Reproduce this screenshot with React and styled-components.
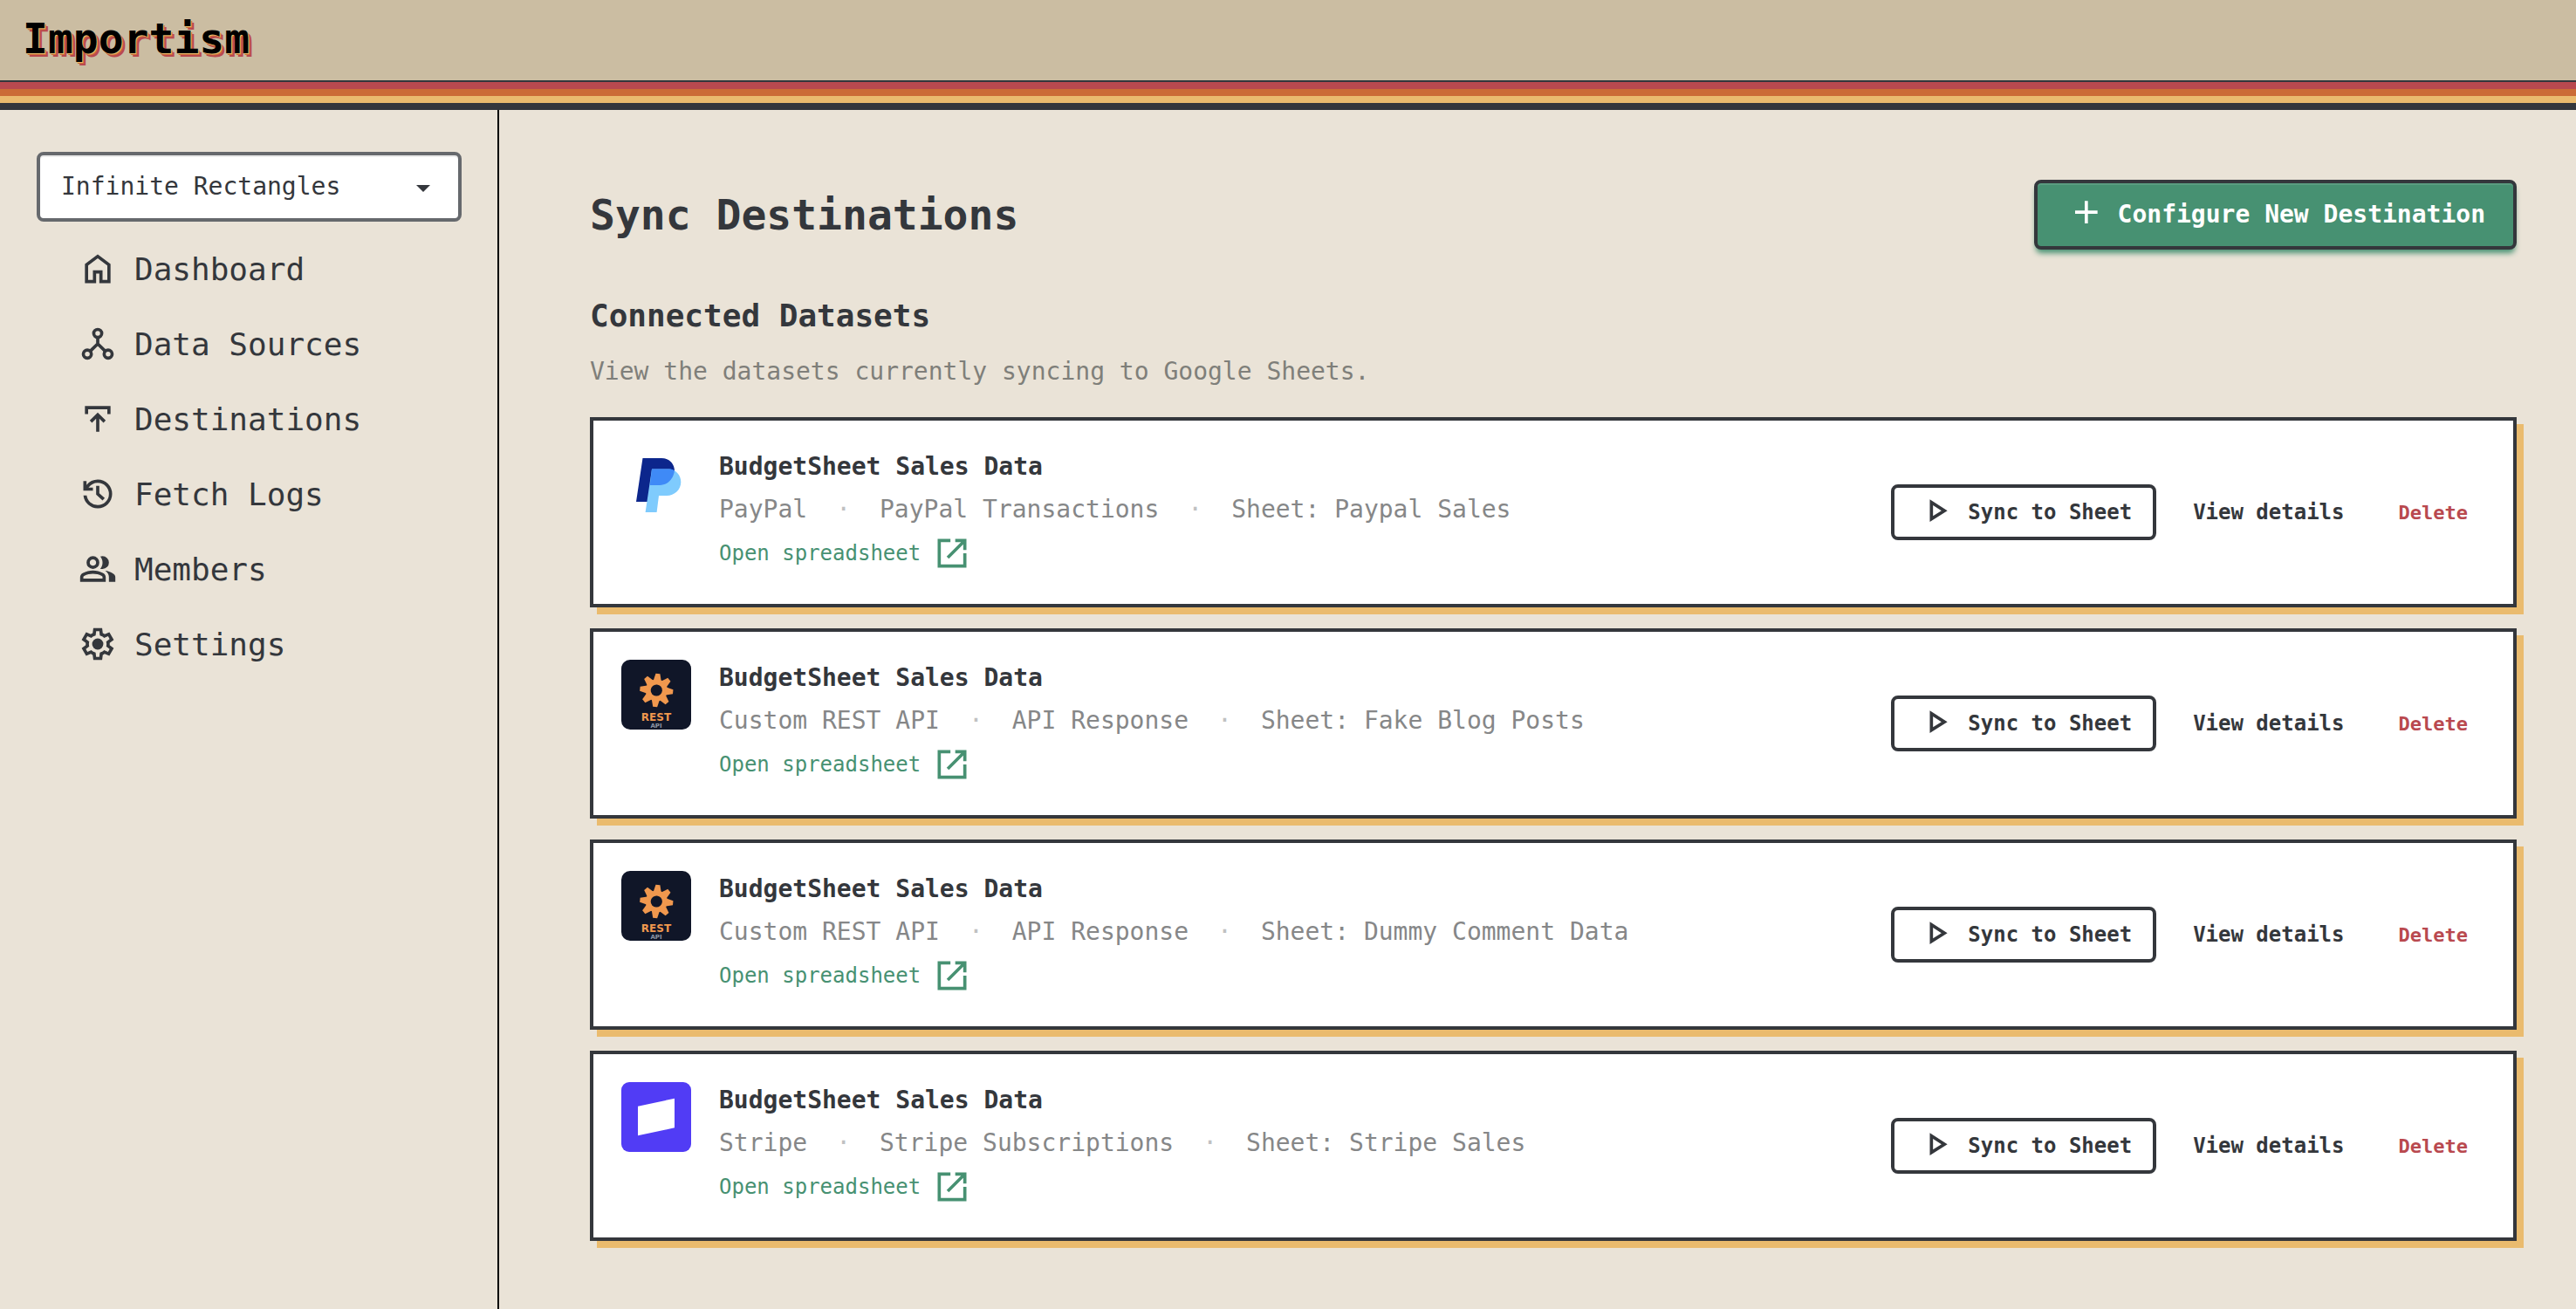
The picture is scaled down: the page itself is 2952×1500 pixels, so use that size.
import { useState } from "react";
import styled, { createGlobalStyle } from "styled-components";

const GlobalStyle = createGlobalStyle`
    * {
        box-sizing: border-box;
    }

    body {
        margin: 0;
        background: #eae3d7;
        color: #34373c;
        font-family: "DejaVu Sans Mono", "Liberation Mono", monospace;
        font-size: 28px;
    }

    h1, h2, h3, p, ul {
        margin: 0;
        padding: 0;
    }

    button, select {
        font-family: inherit;
    }
`;

const Page = styled.div`
    display: flex;
    flex-direction: column;
    min-height: 100vh;
`;

const Header = styled.header`
    display: flex;
    padding: 16px 26px 20px;
    background: #cbbda2;
    border-bottom: 2px solid #34373c;
`;

const Logo = styled.a`
    color: #000;
    font-size: 48px;
    font-weight: bold;
    line-height: 56px;
    text-decoration: none;
    text-shadow: 1px 1px 0 #eabb6e, 2px 2px 0 #cb6c36, 4px 4px 0 #b9494f;
`;

const Stripe = styled.div`
    height: 8px;
    background: ${(props) => props.$color};
`;

const Body = styled.div`
    display: flex;
    flex: 1;
`;

const Sidebar = styled.aside`
    flex: none;
    width: 572px;
    padding: 48px 41px 48px 42px;
    border-right: 2px solid #000;
`;

const SelectWrap = styled.div`
    position: relative;
`;

const TeamSelect = styled.select`
    display: block;
    width: 100%;
    height: 80px;
    padding: 0 64px 2px 24px;
    appearance: none;
    background: #fff;
    border: 4px solid #66696d;
    border-radius: 8px;
    box-shadow: inset 0 2px 0 #ebebeb;
    color: #34373c;
    font-size: 28px;
`;

const SelectArrow = styled.svg`
    position: absolute;
    top: 38px;
    right: 36px;
    width: 16px;
    height: 8px;
    pointer-events: none;
`;

const NavList = styled.ul`
    margin-top: 11px;
    padding-left: 48px;
    list-style: none;
`;

const NavLink = styled.a`
    display: flex;
    align-items: center;
    gap: 20px;
    height: 86px;
    color: #34373c;
    font-size: 36px;
    text-decoration: none;
`;

const IconSvg = styled.svg`
    flex: none;
    width: 44px;
    height: 44px;
    fill: currentColor;
`;

const Main = styled.main`
    flex: 1;
    min-width: 0;
    padding: 80px 68px 78px 104px;
`;

const TitleRow = styled.div`
    display: flex;
    align-items: center;
    justify-content: space-between;
`;

const PageTitle = styled.h1`
    font-size: 48px;
    line-height: 56px;
`;

const PrimaryButton = styled.button`
    display: flex;
    align-items: center;
    gap: 16px;
    height: 80px;
    padding: 0 32px 2px;
    background: #479172;
    border: 4px solid #34373c;
    border-radius: 8px;
    box-shadow: inset 0 2px 0 #5a9c80, 0 6px 6px -2px #479172;
    color: #fff;
    font-size: 28px;
    font-weight: bold;
`;

const SectionTitle = styled.h2`
    margin-top: 52px;
    font-size: 36px;
    line-height: 48px;
`;

const SectionText = styled.p`
    margin-top: 20px;
    color: #7f7f7a;
    line-height: 40px;
`;

const CardList = styled.div`
    display: flex;
    flex-direction: column;
    gap: 24px;
    margin-top: 32px;
`;

const Card = styled.article`
    display: flex;
    align-items: center;
    gap: 32px;
    padding: 32px;
    background: #fff;
    border: 4px solid #34373c;
    box-shadow: 8px 8px 0 #eabb6e;
`;

const LogoSvg = styled.svg`
    flex: none;
    align-self: flex-start;
    width: 80px;
    height: 80px;
`;

const Details = styled.div`
    flex: 1;
    padding-bottom: 4px;
`;

const CardTitle = styled.h3`
    font-size: 28px;
    line-height: 42px;
`;

const Meta = styled.p`
    display: flex;
    gap: 33px;
    margin-top: 8px;
    color: #868788;
    line-height: 40px;
`;

const Dot = styled.span`
    color: #c0c1c2;
`;

const SheetLink = styled.a`
    display: inline-flex;
    align-items: center;
    gap: 14px;
    margin-top: 8px;
    color: #479172;
    font-size: 24px;
    text-decoration: none;
    vertical-align: top;
`;

const Actions = styled.div`
    display: flex;
    align-items: center;
    gap: 14px;
`;

const ActionButton = styled.button`
    display: flex;
    align-items: center;
    gap: 16px;
    height: 64px;
    padding: 0 24px;
    background: transparent;
    border: 4px solid ${(props) => (props.$outlined ? "#34373c" : "transparent")};
    border-radius: 8px;
    color: #34373c;
    font-size: 24px;
    font-weight: bold;
`;

const DeleteButton = styled.button`
    height: 64px;
    padding: 0 20px;
    background: transparent;
    border: 0;
    color: #b9494f;
    font-size: 22px;
    font-weight: bold;
`;

const HomeIcon = () => (
    <IconSvg viewBox="0 0 24 24">
        <path d="M4 21V9l8-6 8 6v12h-7v-6h-2v6H4Zm2-2h3v-6h6v6h3v-9l-6-4.5L6 10v9Z" />
    </IconSvg>
);

const SourcesIcon = () => (
    <IconSvg viewBox="0 0 24 24">
        <g fill="none" stroke="currentColor" strokeWidth="2">
            <circle cx="12" cy="5.5" r="2.5" />
            <circle cx="5.5" cy="18.4" r="2.5" />
            <circle cx="18.5" cy="18.4" r="2.5" />
            <path d="M12 8v4.5M7.3 16.6 12 12l4.7 4.6" />
        </g>
    </IconSvg>
);

const DestinationsIcon = () => (
    <IconSvg viewBox="0 -960 960 960">
        <path d="M440-160v-326L336-382l-56-58 200-200 200 200-56 58-104-104v326h-80ZM160-600v-200h640v200h-80v-120H240v120h-80Z" />
    </IconSvg>
);

const HistoryIcon = () => (
    <IconSvg viewBox="0 -960 960 960">
        <path d="M480-120q-138 0-240.500-91.500T122-440h82q14 104 92.500 172T480-200q117 0 198.500-81.500T760-480q0-117-81.500-198.500T480-760q-69 0-129 32t-101 88h110v80H120v-240h80v94q51-64 124.500-99T480-840q75 0 140.500 28.500t114 77q48.500 48.500 77 114T840-480q0 75-28.500 140.500t-77 114q-48.500 48.500-114 77T480-120Zm120-196L440-464v-216h80v182l136 124-56 58Z" />
    </IconSvg>
);

const MembersIcon = () => (
    <IconSvg viewBox="0 -960 960 960">
        <path d="M40-160v-112q0-34 17.500-62.500T104-378q62-31 126-46.500T360-440q66 0 130 15.500T616-378q29 15 46.500 43.500T680-272v112H40Zm720 0v-120q0-44-24.500-84.500T666-434q51 6 96 20.500t84 35.500q36 20 55 44.500t19 53.500v120H760ZM360-480q-66 0-113-47t-47-113q0-66 47-113t113-47q66 0 113 47t47 113q0 66-47 113t-113 47Zm400-160q0 66-47 113t-113 47q-11 0-28-2.500t-28-5.500q27-32 41.500-71t14.500-81q0-42-14.500-81T544-792q14-5 28-6.500t28-1.500q66 0 113 47t47 113ZM120-240h480v-32q0-11-5.500-20T580-306q-54-27-109-40.500T360-360q-56 0-111 13.500T140-306q-9 5-14.500 14t-5.500 20v32Zm240-320q33 0 56.500-23.500T440-640q0-33-23.500-56.500T360-720q-33 0-56.500 23.500T280-640q0 33 23.500 56.500T360-560Z" />
    </IconSvg>
);

const SettingsIcon = () => (
    <IconSvg viewBox="0 -960 960 960">
        <path d="m370-80-16-128q-13-5-24.500-12T307-235l-119 50L78-375l103-78q-1-7-1-13.500v-27q0-6.500 1-13.500L78-585l110-190 119 50q11-8 23-15t24-12l16-128h220l16 128q13 5 24.500 12t22.500 15l119-50 110 190-103 78q1 7 1 13.500v27q0 6.500-2 13.500l103 78-110 190-118-50q-11 8-23 15t-24 12L590-80H370Zm70-80h79l14-106q31-8 57.500-23.500T639-327l99 41 39-68-86-65q5-14 7-29.500t2-31.500q0-16-2-31.500t-7-29.500l86-65-39-68-99 42q-22-23-48.500-38.500T533-694l-13-106h-79l-14 106q-31 8-57.500 23.500T321-633l-99-41-39 68 86 64q-5 15-7 30t-2 32q0 16 2 31t7 30l-86 65 39 68 99-42q22 23 48.500 38.500T427-266l13 106Z" />
        <circle cx="480" cy="-480" r="140" />
    </IconSvg>
);

const PlusIcon = () => (
    <IconSvg viewBox="-1 1 24 24">
        <path d="M19 13h-6v6h-2v-6H5v-2h6V5h2v6h6v2Z" />
    </IconSvg>
);

const PlayIcon = () => (
    <IconSvg viewBox="-1 1 24 24">
        <path d="M8 5v14l11-7L8 5Zm2 3.640L15.270 12 10 15.360V8.640Z" />
    </IconSvg>
);

const OpenIcon = () => (
    <IconSvg viewBox="0 0 24 24">
        <path d="M11 3H3v18h18v-9h-2v7H5V5h6V3Z" />
        <path d="M14 3v2h3.600l-9 9 1.400 1.400 9-9V10h2V3h-7Z" />
    </IconSvg>
);

const PaypalLogo = () => (
    <LogoSvg viewBox="0 0 80 80">
        <path fill="#0c268c" d="M24.500 11H46c9 0 14.500 6 15 14L45 44H33l-3 17H17Z" />
        <path fill="#7fcbfd" d="M35 23.500h20c8 1 13.300 7 13.300 15C68.300 47 61 54 52 54h-9l-2.400 19h-13Z" />
        <path fill="#3f8af7" d="M35 23.500h20c2 0 4.500.700 6 1.500-1 9-7.500 17-17 17H32.800Z" />
    </LogoSvg>
);

// one tooth, pointing up, centred on the gear's middle
const TOOTH = "M-4.500-11-2.500-19h5l2 8Z";

const RestLogo = () => (
    <LogoSvg viewBox="0 0 80 80">
        <rect width="80" height="80" rx="10" fill="#101628" />
        <g transform="translate(40.300 35) rotate(5)" fill="#f0984e">
            {[0, 45, 90, 135, 180, 225, 270, 315].map((angle) => (
                <path key={angle} d={TOOTH} transform={`rotate(${angle})`} />
            ))}
            <circle r="12.500" />
            <circle r="6.600" fill="#101628" />
        </g>
        <text x="40" y="70" textAnchor="middle" fill="#f0984e" fontFamily="DejaVu Sans, sans-serif" fontSize="12" fontWeight="bold">
            REST
        </text>
        <text x="40" y="78" textAnchor="middle" fill="#8c94a3" fontFamily="DejaVu Sans, sans-serif" fontSize="7" fontWeight="bold">
            API
        </text>
    </LogoSvg>
);

const StripeLogo = () => (
    <LogoSvg viewBox="0 0 80 80">
        <rect width="80" height="80" rx="9" fill="#513cf5" />
        <path fill="#fff" d="M19 27.700 61 18.700v33.600L19 61.300Z" />
    </LogoSvg>
);

const navItems = [
    { label: "Dashboard", Icon: HomeIcon },
    { label: "Data Sources", Icon: SourcesIcon },
    { label: "Destinations", Icon: DestinationsIcon },
    { label: "Fetch Logs", Icon: HistoryIcon },
    { label: "Members", Icon: MembersIcon },
    { label: "Settings", Icon: SettingsIcon },
];

const datasets = [
    { id: 1, Icon: PaypalLogo, source: "PayPal", dataset: "PayPal Transactions", sheet: "Paypal Sales" },
    { id: 2, Icon: RestLogo, source: "Custom REST API", dataset: "API Response", sheet: "Fake Blog Posts" },
    { id: 3, Icon: RestLogo, source: "Custom REST API", dataset: "API Response", sheet: "Dummy Comment Data" },
    { id: 4, Icon: StripeLogo, source: "Stripe", dataset: "Stripe Subscriptions", sheet: "Stripe Sales" },
];

const DatasetCard = ({ item }) => {
    const { Icon, source, dataset, sheet } = item;

    return (
        <Card>
            <Icon />
            <Details>
                <CardTitle>BudgetSheet Sales Data</CardTitle>
                <Meta>
                    <span>{source}</span>
                    <Dot>·</Dot>
                    <span>{dataset}</span>
                    <Dot>·</Dot>
                    <span>Sheet: {sheet}</span>
                </Meta>
                <SheetLink href="#">
                    Open spreadsheet
                    <OpenIcon />
                </SheetLink>
            </Details>
            <Actions>
                <ActionButton type="button" $outlined>
                    <PlayIcon />
                    Sync to Sheet
                </ActionButton>
                <ActionButton type="button">View details</ActionButton>
                <DeleteButton type="button">Delete</DeleteButton>
            </Actions>
        </Card>
    );
};

const App = () => {
    const [team, setTeam] = useState("Infinite Rectangles");

    return (
        <Page>
            <GlobalStyle />
            <Header>
                <Logo href="#">Importism</Logo>
            </Header>
            <Stripe $color="#b9494f" />
            <Stripe $color="#cb6c36" />
            <Stripe $color="#eabb6e" />
            <Stripe $color="#34373c" />
            <Body>
                <Sidebar>
                    <SelectWrap>
                        <TeamSelect aria-label="Team" value={team} onChange={(e) => setTeam(e.target.value)}>
                            <option>Infinite Rectangles</option>
                        </TeamSelect>
                        <SelectArrow viewBox="0 0 16 8">
                            <path d="M0 0h16L8 8Z" fill="#34373c" />
                        </SelectArrow>
                    </SelectWrap>
                    <nav>
                        <NavList>
                            {navItems.map(({ label, Icon }) => (
                                <li key={label}>
                                    <NavLink href="#">
                                        <Icon />
                                        {label}
                                    </NavLink>
                                </li>
                            ))}
                        </NavList>
                    </nav>
                </Sidebar>
                <Main>
                    <TitleRow>
                        <PageTitle>Sync Destinations</PageTitle>
                        <PrimaryButton type="button">
                            <PlusIcon />
                            Configure New Destination
                        </PrimaryButton>
                    </TitleRow>
                    <SectionTitle>Connected Datasets</SectionTitle>
                    <SectionText>View the datasets currently syncing to Google Sheets.</SectionText>
                    <CardList>
                        {datasets.map((item) => (
                            <DatasetCard key={item.id} item={item} />
                        ))}
                    </CardList>
                </Main>
            </Body>
        </Page>
    );
};

export default App;
